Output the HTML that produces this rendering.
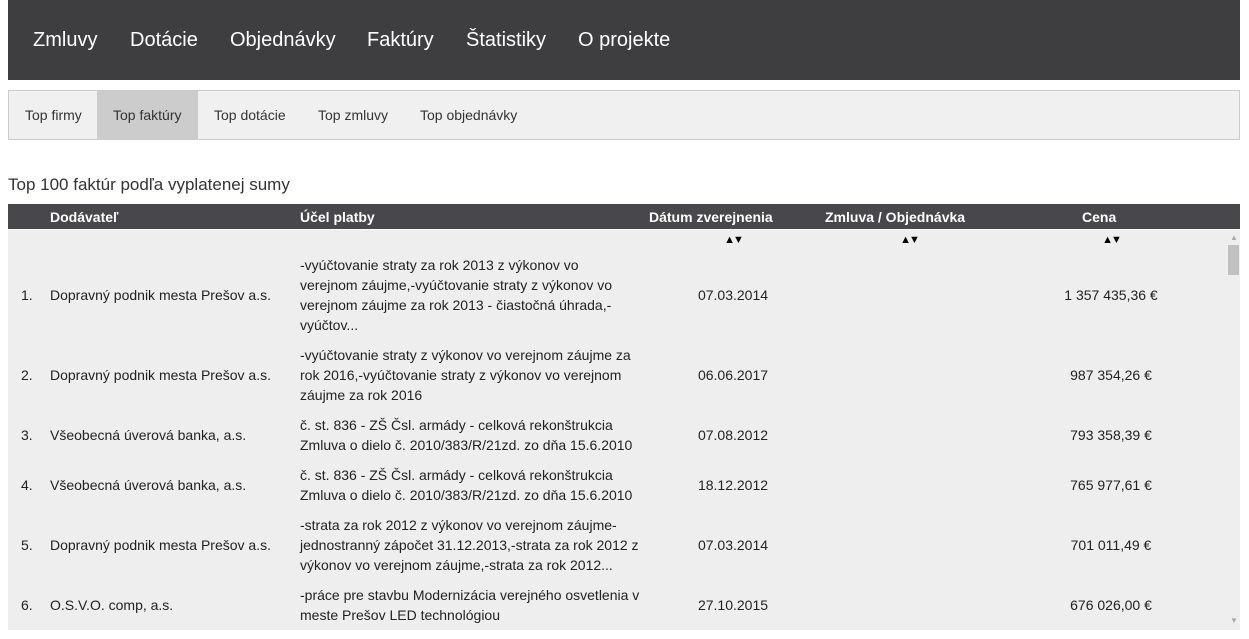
<!DOCTYPE html>
<html><head><meta charset="utf-8"><style>
body{margin:0;background:#fff;font-family:"Liberation Sans",sans-serif;color:#222;width:1249px;height:639px;overflow:hidden;position:relative}
.top{position:absolute;left:8px;top:0;width:1232px;height:80px;background:#3e3d3f}
.top a{position:absolute;top:29px;color:#fff;font-size:20px;text-decoration:none}
.sub{position:absolute;left:8px;top:90px;width:1230px;height:48px;background:#f0f0f0;border:1px solid #ccc}
.sub span{position:absolute;top:0;height:48px;line-height:48px;font-size:14px;color:#333;padding:0 16px}
h1{position:absolute;left:8px;top:175px;margin:0;font-weight:normal;font-size:17px;color:#333}
.th{position:absolute;left:8px;top:204px;width:1232px;height:25px;background:#48474b;color:#fff;font-weight:bold;font-size:14px}
.th span{position:absolute;top:5px}
.body{position:absolute;left:8px;top:230px;width:1232px;height:400px;background:#eee;overflow:hidden}
.sb{position:absolute;left:1226px;top:230px;width:14px;height:400px;background:#eee}
.thumb{position:absolute;left:1228px;top:245px;width:11px;height:30px;background:#c1c1c1}
.sa{position:absolute;left:1230px;font-size:8px;color:#aaa;line-height:8px}
table{position:absolute;left:0;top:0;border-collapse:collapse;font-size:14px;width:1217.5px;table-layout:fixed}
td{padding:5px;line-height:20px;vertical-align:middle}
td.c{text-align:center}
.ar{font-size:11px;height:10px;padding:5px 0;line-height:10px;color:#000;letter-spacing:-2px}
</style></head><body>
<div class="top">
<a style="left:25px">Zmluvy</a><a style="left:122px">Dotácie</a><a style="left:222px">Objednávky</a><a style="left:359px">Faktúry</a><a style="left:458px">Štatistiky</a><a style="left:570px">O projekte</a>
</div>
<div class="sub">
<span style="left:0">Top firmy</span><span style="left:88px;background:#ccc;width:69px">Top faktúry</span><span style="left:189px">Top dotácie</span><span style="left:293px">Top zmluvy</span><span style="left:395px">Top objednávky</span>
</div>
<h1>Top 100 faktúr podľa vyplatenej sumy</h1>
<div class="th"><span style="left:42px">Dodávateľ</span><span style="left:292px">Účel platby</span><span style="left:641px">Dátum zverejnenia</span><span style="left:817px">Zmluva / Objednávka</span><span style="left:1074px">Cena</span></div>
<div class="body">
<table>
<colgroup><col style="width:37px"><col style="width:250px"><col style="width:349.5px"><col style="width:177px"><col style="width:175px"><col style="width:229px"></colgroup>
<tr><td class="ar"></td><td class="ar"></td><td class="ar"></td><td class="c ar">▲▼</td><td class="c ar">▲▼</td><td class="c ar">▲▼</td></tr>
<tr><td style="padding-left:13px">1.</td><td>Dopravný podnik mesta Prešov a.s.</td><td>-vyúčtovanie straty za rok 2013 z výkonov vo verejnom záujme,-vyúčtovanie straty z výkonov vo verejnom záujme za rok 2013 - čiastočná úhrada,-vyúčtov...</td><td class="c">07.03.2014</td><td></td><td class="c">1 357 435,36 €</td></tr>
<tr><td style="padding-left:13px">2.</td><td>Dopravný podnik mesta Prešov a.s.</td><td>-vyúčtovanie straty z výkonov vo verejnom záujme za rok 2016,-vyúčtovanie straty z výkonov vo verejnom záujme za rok 2016</td><td class="c">06.06.2017</td><td></td><td class="c">987 354,26 €</td></tr>
<tr><td style="padding-left:13px">3.</td><td>Všeobecná úverová banka, a.s.</td><td>č. st. 836 - ZŠ Čsl. armády - celková rekonštrukcia Zmluva o dielo č. 2010/383/R/21zd. zo dňa 15.6.2010</td><td class="c">07.08.2012</td><td></td><td class="c">793 358,39 €</td></tr>
<tr><td style="padding-left:13px">4.</td><td>Všeobecná úverová banka, a.s.</td><td>č. st. 836 - ZŠ Čsl. armády - celková rekonštrukcia Zmluva o dielo č. 2010/383/R/21zd. zo dňa 15.6.2010</td><td class="c">18.12.2012</td><td></td><td class="c">765 977,61 €</td></tr>
<tr><td style="padding-left:13px">5.</td><td>Dopravný podnik mesta Prešov a.s.</td><td>-strata za rok 2012 z výkonov vo verejnom záujme-jednostranný zápočet 31.12.2013,-strata za rok 2012 z výkonov vo verejnom záujme,-strata za rok 2012...</td><td class="c">07.03.2014</td><td></td><td class="c">701 011,49 €</td></tr>
<tr><td style="padding-left:13px">6.</td><td>O.S.V.O. comp, a.s.</td><td>-práce pre stavbu Modernizácia verejného osvetlenia v meste Prešov LED technológiou</td><td class="c">27.10.2015</td><td></td><td class="c">676 026,00 €</td></tr>
</table>
</div>
<div class="sb"></div><div class="thumb"></div>
<div class="sa" style="top:234px">▲</div><div class="sa" style="top:617px">▼</div>
</body></html>
